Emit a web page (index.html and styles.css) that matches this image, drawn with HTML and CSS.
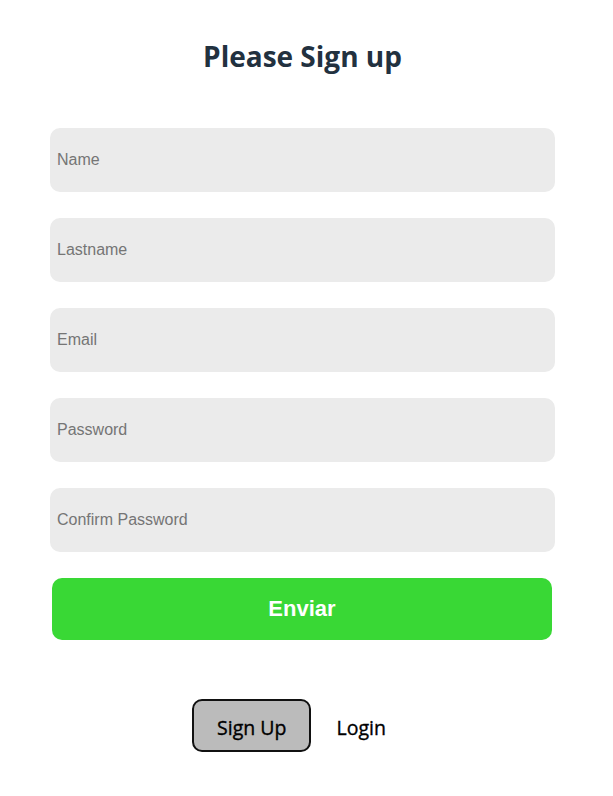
FILE: index.html
```html
<!DOCTYPE html>
<html>
<head>
<meta charset="utf-8">
<link rel="stylesheet" href="styles.css">
</head>
<body>
<main class="page">
  <h1 class="title">Please Sign up</h1>
  <form class="form">
    <input class="field" type="text" placeholder="Name">
    <input class="field" type="text" placeholder="Lastname">
    <input class="field" type="email" placeholder="Email">
    <input class="field" type="password" placeholder="Password">
    <input class="field" type="password" placeholder="Confirm Password">
    <button class="submit" type="button">Enviar</button>
  </form>
  <nav class="tabs">
    <button class="tab tab-active" type="button">Sign Up</button>
    <button class="tab" type="button">Login</button>
  </nav>
</main>
</body>
</html>
```

FILE: styles.css
```css
* { box-sizing: border-box; }
html, body { margin: 0; padding: 0; background: #fff; }
.page {
  width: 505px;
  margin-left: 50px;
  display: flex;
  flex-direction: column;
  align-items: stretch;
}
.title {
  margin: 36px 0 0;
  height: 42px;
  line-height: 40px;
  text-align: center;
  font-family: "Open Sans", "Noto Sans", sans-serif;
  font-weight: 700;
  font-size: 28px;
  color: #22313f;
}
.form {
  margin-top: 50px;
  display: flex;
  flex-direction: column;
  gap: 26px;
}
.field {
  height: 64px;
  border: none;
  border-radius: 10px;
  background: #ebebeb;
  padding: 0 7px;
  font-family: "Liberation Sans", Arial, sans-serif;
  font-size: 16px;
  color: #333;
  outline: none;
}
.field::placeholder { color: #757575; }
.submit {
  margin: 0 3px 0 2px;
  height: 62px;
  border: none;
  border-radius: 10px;
  background: #39d835;
  color: #fff;
  font-family: "Liberation Sans", Arial, sans-serif;
  font-weight: 700;
  font-size: 22px;
}
.tabs {
  margin-top: 59px;
  display: flex;
  justify-content: center;
  align-items: center;
  gap: 0;
  padding-right: 2px;
}
.tab {
  height: 53px;
  padding: 3px 23px 0;
  border: 2px solid transparent;
  border-radius: 10px;
  background: transparent;
  font-family: "Open Sans", "Noto Sans", sans-serif;
  font-weight: 400;
  font-size: 19.5px;
  -webkit-text-stroke: 0.35px #000;
  color: #000;
}
.tab-active {
  background: #bbbbbb;
  border-color: #111;
}
```
